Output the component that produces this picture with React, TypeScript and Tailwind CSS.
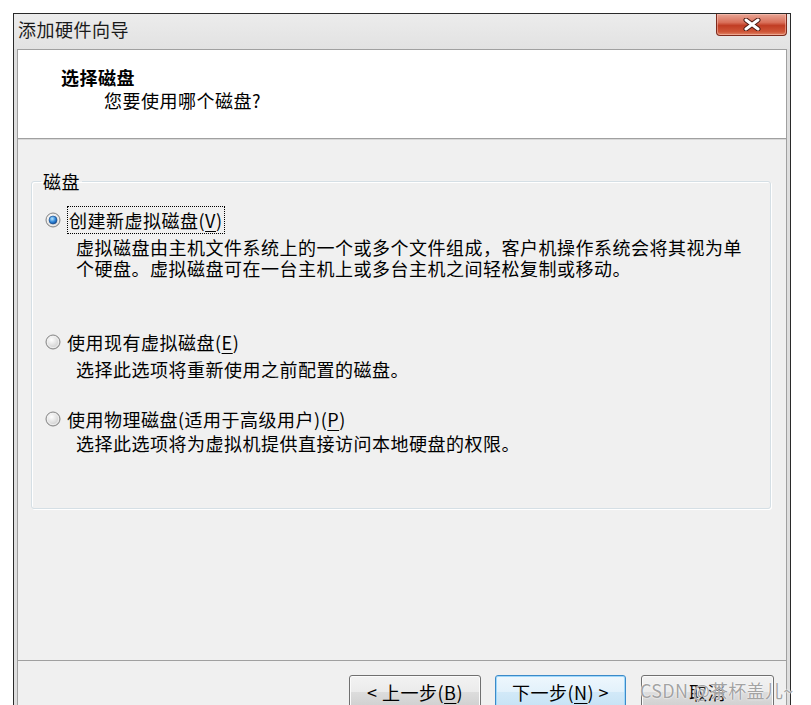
import React from "react";

const cjk = "font-['Noto_Sans_CJK_SC','Noto_Sans',sans-serif]";

function Key({ k }: { k: string }) {
  return <span className="underline decoration-1 underline-offset-[3px]">{k}</span>;
}

function Radio({ checked }: { checked?: boolean }) {
  return (
    <svg width="16" height="16" viewBox="0 0 16 16" className="shrink-0">
      <defs>
        <radialGradient id="rbody" cx="40%" cy="35%" r="75%">
          <stop offset="0" stopColor="#ffffff" />
          <stop offset="1" stopColor="#c4c4c4" />
        </radialGradient>
        <radialGradient id="rdot" cx="40%" cy="35%" r="75%">
          <stop offset="0" stopColor="#b6e6ff" />
          <stop offset="0.55" stopColor="#2b82d6" />
          <stop offset="1" stopColor="#0e3f86" />
        </radialGradient>
      </defs>
      <circle cx="8" cy="8" r="7" fill="url(#rbody)" stroke="#868686" />
      <circle cx="8" cy="8" r="5.6" fill="none" stroke="#f4f4f4" strokeWidth="0.8" />
      {checked && <circle cx="8" cy="8" r="4" fill="url(#rdot)" stroke="#1b4c88" strokeWidth="0.6" />}
    </svg>
  );
}

type Opt = {
  label: React.ReactNode;
  desc: string[];
  checked?: boolean;
  rowTop: string;
  descTop: string;
};

const options: Opt[] = [
  {
    label: (
      <span className="border border-dotted border-black px-[1px] leading-[20px]">
        创建新虚拟磁盘(<Key k="V" />)
      </span>
    ),
    desc: [
      "虚拟磁盘由主机文件系统上的一个或多个文件组成，客户机操作系统会将其视为单",
      "个硬盘。虚拟磁盘可在一台主机上或多台主机之间轻松复制或移动。",
    ],
    checked: true,
    rowTop: "mt-[15px]",
    descTop: "mt-[5px]",
  },
  {
    label: (
      <span>
        使用现有虚拟磁盘(<Key k="E" />)
      </span>
    ),
    desc: ["选择此选项将重新使用之前配置的磁盘。"],
    rowTop: "mt-[51px]",
    descTop: "mt-[5px]",
  },
  {
    label: (
      <span>
        使用物理磁盘(适用于高级用户)(<Key k="P" />)
      </span>
    ),
    desc: ["选择此选项将为虚拟机提供直接访问本地硬盘的权限。"],
    rowTop: "mt-[27px]",
    descTop: "mt-[2px]",
  },
];

export default function App() {
  return (
    <div className={`relative h-[705px] w-[811px] overflow-hidden bg-white pl-[13px] pt-[13px] ${cjk} text-[18px] tracking-[0.5px] text-black`}>
      <div className="flex h-[720px] w-[778px] flex-col border border-[#2a2a2a] bg-[#dedede] px-[3px]">
        {/* title bar */}
        <div className="-mx-[3px] flex h-[35px] shrink-0 items-start bg-[linear-gradient(#ececec,#e2e2e2)]">
          <span className="pl-[4px] pt-[4px] leading-[22px] text-[#1a1a1a]">添加硬件向导</span>
          <button className="ml-auto mr-[3px] grid h-[22px] w-[71px] place-items-center rounded-b-[4px] border border-t-0 border-[#7e2a1c] bg-[linear-gradient(#e8a595,#d9705a_40%,#c13d24_55%,#cf5638_85%,#e28a6c)] shadow-[inset_0_0_0_1px_rgba(255,210,200,0.45)]">
            <svg width="18" height="13" viewBox="0 0 18 13">
              <path d="M3 2 L15 11 M15 2 L3 11" stroke="#4a1a12" strokeWidth="5" strokeLinecap="round" />
              <path d="M3 2 L15 11 M15 2 L3 11" stroke="#ffffff" strokeWidth="3" strokeLinecap="round" />
            </svg>
          </button>
        </div>

        {/* content */}
        <div className="flex flex-1 flex-col border-x border-t border-[#a0a0a0] bg-[#f0f0f0]">
          <div className="h-[89px] shrink-0 border-b border-[#a0a0a0] bg-white shadow-[0_1px_0_#d8d8d8]">
            <div className="pl-[43px] pt-[15px] font-bold leading-[24px]">选择磁盘</div>
            <div className="pl-[86px] leading-[22px]">您要使用哪个磁盘?</div>
          </div>

          <div className="flex h-[521px] shrink-0 flex-col px-[13px] pt-[30px]">
            <fieldset className="mr-[2px] rounded-[3px] border border-[#d5dfe5] pb-[54px] pl-[13px] shadow-[inset_1px_1px_0_#ffffff,1px_1px_0_#ffffff]">
              <legend className="-ml-[4px] px-[2px] leading-[24px]">磁盘</legend>
              {options.map((o, i) => (
                <div key={i}>
                  <div className={`flex h-[24px] items-center gap-[6px] ${o.rowTop}`}>
                    <Radio checked={o.checked} />
                    <span className="leading-[24px]">{o.label}</span>
                  </div>
                  <div className={`flex flex-col pl-[31px] ${o.descTop}`}>
                    {o.desc.map((line) => (
                      <p key={line} className="h-[21px] leading-[21px]">
                        {line}
                      </p>
                    ))}
                  </div>
                </div>
              ))}
            </fieldset>
          </div>

          <div className="border-t border-[#a0a0a0] shadow-[inset_0_1px_0_#ffffff]" />
          <div className="flex justify-end gap-[14px] pr-[12px] pt-[14px]">
            <button className="h-[34px] w-[132px] rounded-[3px] border border-[#707070] bg-[linear-gradient(#f2f2f2,#ebebeb_50%,#dddddd_50%,#cfcfcf)] leading-[30px] shadow-[inset_0_0_0_1px_#fbfbfb]">
              &lt; 上一步(<Key k="B" />)
            </button>
            <button className="h-[34px] w-[131px] rounded-[3px] border border-[#3c8ac8] bg-[linear-gradient(#eef7fd,#e2f1fb_50%,#d2e9f8_50%,#c6e2f5)] leading-[30px] shadow-[inset_0_0_0_1px_#9fd8fb]">
              下一步(<Key k="N" />) &gt;
            </button>
            <button className="ml-[1px] h-[34px] w-[133px] rounded-[3px] border border-[#707070] bg-[linear-gradient(#f2f2f2,#ebebeb_50%,#dddddd_50%,#cfcfcf)] leading-[30px] shadow-[inset_0_0_0_1px_#fbfbfb]">
              取消
            </button>
          </div>
        </div>
      </div>

      {/* watermark */}
      <div className="pointer-events-none absolute left-[640px] top-[677px] whitespace-nowrap text-[18px] tracking-[0.3px] text-[#a3a3a3] [text-shadow:0_0_2px_#ffffff,0_0_1px_#ffffff]">
        CSDN @茶杯盖儿~
      </div>
    </div>
  );
}
